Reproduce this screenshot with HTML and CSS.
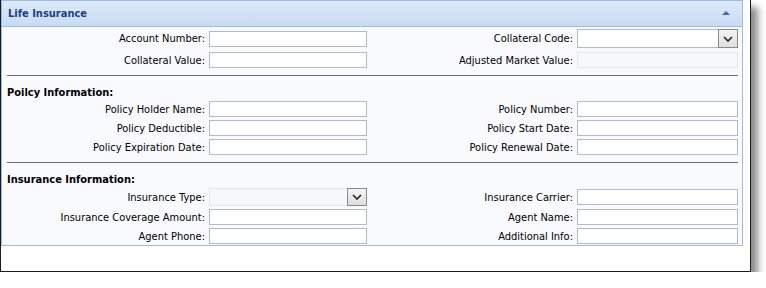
FILE: index.html
```html
<!DOCTYPE html>
<html lang="en">
<head>
    <meta charset="UTF-8">
    <title>Life Insurance</title>
    <link rel="stylesheet" href="styles.css">
</head>
<body>

<div class="frame">
    <div class="panel">
        <div class="panel-header">
            <span class="panel-title">Life Insurance</span>
            <span class="collapse-tool"></span>
        </div>
        <div class="panel-body">

            <div class="form-grid top">
                <label>Account Number:</label>
                <input type="text" class="field">
                <label>Collateral Code:</label>
                <div class="combo">
                    <div class="combo-text"></div>
                    <div class="combo-btn">
                        <svg width="10" height="6" viewBox="0 0 10 6"><polyline points="1,1 5,5 9,1" fill="none" stroke="#222" stroke-width="1.6"/></svg>
                    </div>
                </div>

                <label>Collateral Value:</label>
                <input type="text" class="field">
                <label>Adjusted Market Value:</label>
                <input type="text" class="field disabled" disabled>
            </div>

            <hr class="divider">

            <h3 class="section-title">Poilcy Information:</h3>
            <div class="form-grid">
                <label>Policy Holder Name:</label>
                <input type="text" class="field">
                <label>Policy Number:</label>
                <input type="text" class="field">

                <label>Policy Deductible:</label>
                <input type="text" class="field">
                <label>Policy Start Date:</label>
                <input type="text" class="field">

                <label>Policy Expiration Date:</label>
                <input type="text" class="field">
                <label>Policy Renewal Date:</label>
                <input type="text" class="field">
            </div>

            <hr class="divider">

            <h3 class="section-title">Insurance Information:</h3>
            <div class="form-grid insurance">
                <label>Insurance Type:</label>
                <div class="combo disabled">
                    <div class="combo-text"></div>
                    <div class="combo-btn">
                        <svg width="10" height="6" viewBox="0 0 10 6"><polyline points="1,1 5,5 9,1" fill="none" stroke="#222" stroke-width="1.6"/></svg>
                    </div>
                </div>
                <label>Insurance Carrier:</label>
                <input type="text" class="field">

                <label>Insurance Coverage Amount:</label>
                <input type="text" class="field">
                <label>Agent Name:</label>
                <input type="text" class="field">

                <label>Agent Phone:</label>
                <input type="text" class="field">
                <label>Additional Info:</label>
                <input type="text" class="field">
            </div>

        </div>
    </div>
</div>

</body>
</html>
```

FILE: styles.css
```css
* {
    box-sizing: border-box;
    margin: 0;
    padding: 0;
}

body {
    background-color: #fff;
    font-family: "DejaVu Sans Condensed", "DejaVu Sans", sans-serif;
    font-size: 11px;
    color: #000;
}

.frame {
    width: 751px;
    height: 272px;
    border: 1px solid #1a1a1a;
    border-top: none;
    background: #fff;
    padding-right: 7px;
    box-shadow: 7px 7px 7px rgba(0, 0, 0, 0.45);
}

.panel {
    border: 1px solid #99bbe8;
    background: #f8fafe;
    height: 246px;
    overflow: hidden;
}

.panel-header {
    height: 26px;
    display: flex;
    align-items: center;
    justify-content: space-between;
    padding: 0 12px 0 6px;
    background: linear-gradient(to bottom, #dde9f8, #c9dbf1);
    border-bottom: 1px solid #99bbe8;
}

.panel-title {
    font-weight: bold;
    color: #15428b;
}

.collapse-tool {
    width: 0;
    height: 0;
    border-left: 4px solid transparent;
    border-right: 4px solid transparent;
    border-bottom: 4px solid #3b6db4;
    margin-top: -2px;
}

.panel-body {
    padding: 2px 4px 0 5px;
}

.form-grid {
    display: grid;
    grid-template-columns: 202px 158px 210px 161px;
    grid-auto-rows: 16px;
    row-gap: 3px;
    align-items: center;
}

.form-grid.top {
    grid-template-rows: 19px 16px;
    row-gap: 4px;
}

.form-grid.insurance {
    grid-template-rows: 18px 16px 16px;
    row-gap: 3px;
}

.form-grid label {
    text-align: right;
    padding-right: 4px;
    white-space: nowrap;
}

.field {
    height: 16px;
    border: 1px solid #b5b8c8;
    background: #fff;
    font-size: 11px;
}

.field.disabled {
    border-color: #e4e7ee;
    background: #f6f8fb;
}

.combo {
    display: flex;
    height: 19px;
    border: 1px solid #b5b8c8;
    background: #fff;
}

.insurance .combo {
    height: 18px;
}

.combo.disabled {
    background: #f6f8fb;
    border-color: #e2e5ec;
}

.combo-text {
    flex: 1;
}

.combo-btn {
    width: 20px;
    margin: -1px -1px -1px 0;
    border: 1px solid #8a8a8a;
    background: linear-gradient(to bottom, #f4f4f4, #dedede);
    display: flex;
    align-items: center;
    justify-content: center;
}

.divider {
    border: none;
    border-top: 1px solid #6e6e6e;
    margin: 7px 0 10px;
}

.section-title {
    font-size: 11px;
    font-weight: bold;
    margin-bottom: 2px;
}
```
